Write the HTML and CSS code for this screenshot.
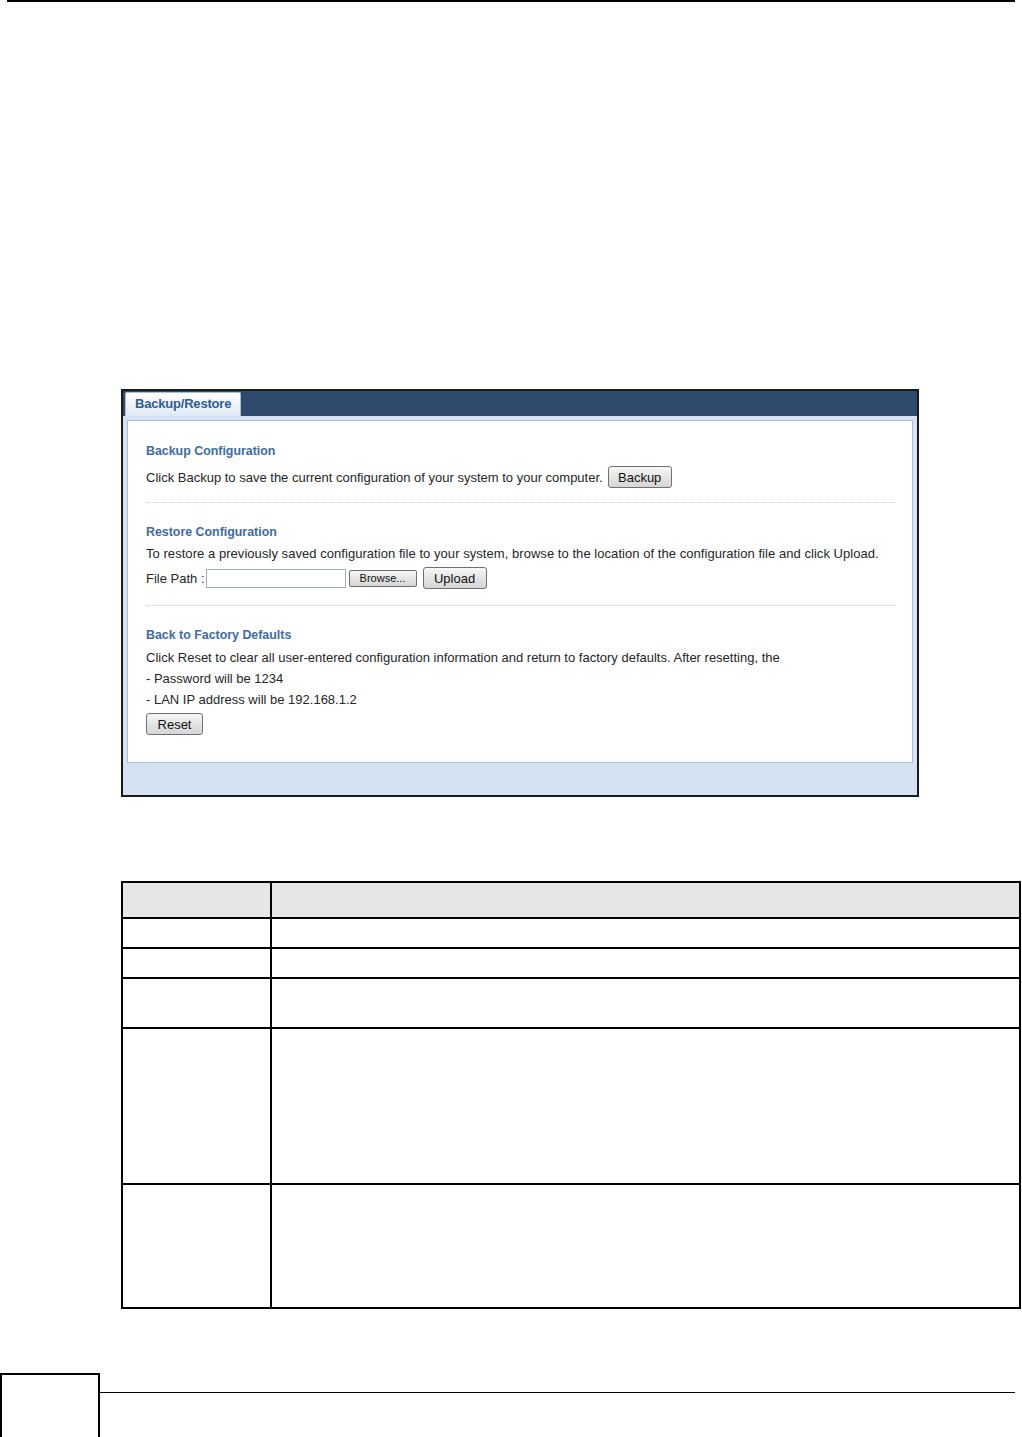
FILE: index.html
```html
<!DOCTYPE html>
<html lang="en">
<head>
    <meta charset="UTF-8">
    <title>Backup/Restore</title>
    <link rel="stylesheet" href="styles.css">
</head>
<body>
    <div class="top-rule"></div>

    <div class="shot">
        <div class="tabbar">
            <div class="tab">Backup/Restore</div>
        </div>
        <div class="frame">
            <div class="panel">
                <h3>Backup Configuration</h3>
                <div class="row">
                    <span>Click Backup to save the current configuration of your system to your computer.</span>
                    <button class="btn btn-backup">Backup</button>
                </div>
                <div class="sep"></div>

                <h3>Restore Configuration</h3>
                <p class="line">To restore a previously saved configuration file to your system, browse to the location of the configuration file and click Upload.</p>
                <div class="row row-file">
                    <span>File Path :</span>
                    <input type="text" class="path">
                    <button class="btn btn-browse">Browse...</button>
                    <button class="btn btn-upload">Upload</button>
                </div>
                <div class="sep sep-low"></div>

                <h3>Back to Factory Defaults</h3>
                <div class="list">
                    <p>Click Reset to clear all user-entered configuration information and return to factory defaults. After resetting, the</p>
                    <p>- Password will be 1234</p>
                    <p>- LAN IP address will be 192.168.1.2</p>
                </div>
                <button class="btn btn-reset">Reset</button>
            </div>
            <div class="foot"></div>
        </div>
    </div>

    <table class="desc">
        <tr class="head"><th class="c1"></th><th></th></tr>
        <tr class="r1"><td class="c1"></td><td></td></tr>
        <tr class="r2"><td class="c1"></td><td></td></tr>
        <tr class="r3"><td class="c1"></td><td></td></tr>
        <tr class="r4"><td class="c1"></td><td></td></tr>
        <tr class="r5"><td class="c1"></td><td></td></tr>
    </table>

    <div class="footer">
        <div class="page-box"></div>
        <div class="footer-line"></div>
    </div>
</body>
</html>
```

FILE: styles.css
```css
* {
    box-sizing: border-box;
    margin: 0;
    padding: 0;
}

body {
    font-family: "Liberation Sans", Arial, sans-serif;
    background: #fff;
    width: 1022px;
    height: 1437px;
    overflow: hidden;
}

.top-rule {
    height: 2px;
    background: #000;
    margin: 0 7px;
}

/* screenshot of the web configurator */
.shot {
    width: 798px;
    height: 408px;
    margin: 387px 0 0 121px;
    border: 2px solid #1b1b1b;
    background: #d4e2f2;
    display: flex;
    flex-direction: column;
}

.tabbar {
    height: 25px;
    background: #2f4a6d;
    padding: 1px 0 0 2px;
    display: flex;
}

.tab {
    width: 116px;
    height: 24px;
    background: linear-gradient(#ffffff, #dfe9f5);
    border: 1px solid #a9bfd9;
    border-bottom: none;
    border-radius: 2px 2px 0 0;
    color: #2b5c96;
    font-weight: bold;
    font-size: 13px;
    line-height: 22px;
    padding-left: 9px;
    letter-spacing: -0.2px;
}

.frame {
    flex: 1;
    padding: 4px 4px 0 4px;
    display: flex;
    flex-direction: column;
}

.panel {
    background: #fff;
    border: 1px solid #a3bddc;
    border-bottom: 1px solid #a9c3df;
    padding: 23px 17px 25px 18px;
    height: 343px;
    color: #262626;
    font-size: 13px;
}

.foot {
    flex: 1;
}

h3 {
    font-size: 12.4px;
    line-height: 14px;
    color: #3d6ba4;
    font-weight: bold;
    margin-bottom: 8px;
}

.row {
    display: flex;
    align-items: center;
    height: 22px;
}

.row span {
    margin-right: 5px;
}

.line {
    line-height: 14px;
    margin-top: 4px;
    margin-bottom: 6px;
    letter-spacing: 0.05px;
}

.sep {
    border-top: 1px dotted #cfcfcf;
    margin: 14px 0 22px;
}

.sep-low {
    margin-top: 16px;
}

.btn {
    font-family: "Liberation Sans", Arial, sans-serif;
    font-size: 13px;
    color: #111;
    height: 22px;
    border: 1px solid #707070;
    border-radius: 3px;
    background: linear-gradient(#f7f7f7, #e4e4e4 50%, #d6d6d6);
}

.btn-backup {
    width: 64px;
}

.row-file span {
    margin-right: 1px;
}

.path {
    width: 140px;
    height: 19px;
    border: 1px solid #a4abb4;
    margin-right: 3px;
}

.btn-browse {
    width: 68px;
    height: 17px;
    font-size: 11px;
    border-radius: 2px;
    margin-right: 6px;
}

.btn-upload {
    width: 64px;
}

.list {
    margin-top: -3px;
}

.list p {
    line-height: 21px;
}

.btn-reset {
    width: 57px;
    margin-top: 3px;
}

/* field description table */
.desc {
    border-collapse: collapse;
    width: 900px;
    margin: 84px 0 0 121px;
}

.desc th,
.desc td {
    border: 2px solid #000;
    padding: 0;
}

.desc .c1 {
    width: 149px;
}

.desc .head th {
    background: #e6e6e6;
    height: 36px;
}

.desc .r1 td,
.desc .r2 td {
    height: 30px;
}

.desc .r3 td {
    height: 50px;
}

.desc .r4 td {
    height: 156px;
}

.desc .r5 td {
    height: 124px;
}

.footer {
    display: flex;
    margin-top: 64px;
}

.page-box {
    width: 100px;
    height: 70px;
    border: 2px solid #000;
}

.footer-line {
    flex: 1;
    margin: 19px 7px 0 0;
    border-top: 1.5px solid #000;
    height: 0;
}
```
